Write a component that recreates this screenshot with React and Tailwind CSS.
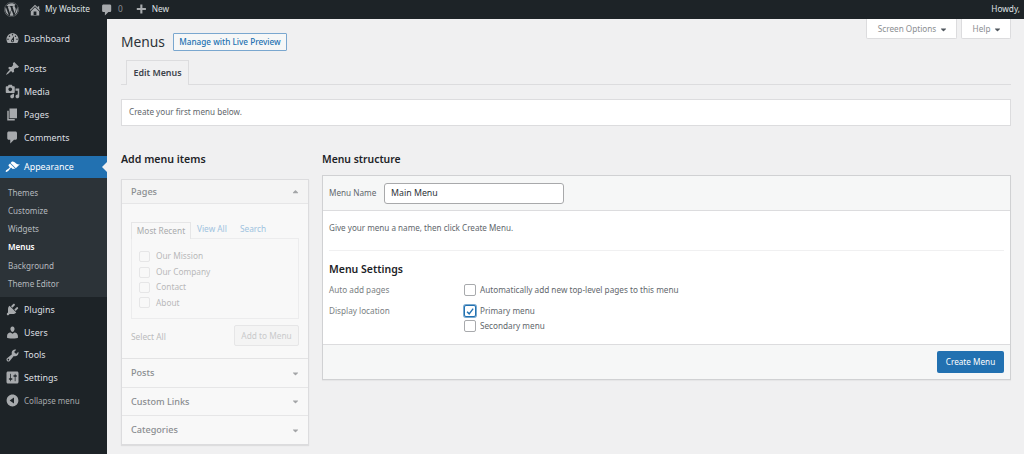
import React from "react";
import { FaWordpress, FaCaretDown, FaCaretUp } from "react-icons/fa";

const D = {
  home: "M16 8.5l1.53 1.53-1.06 1.06L10 4.62l-6.47 6.47-1.06-1.06L10 2.5l4 4v-2h2v4zm-6-2.46l6 5.99V18H4v-5.97zM12 17v-5H8v5h4z",
  comment: "M5 2h9c1.1 0 2 .9 2 2v7c0 1.1-.9 2-2 2h-2l-5 5v-5H5c-1.1 0-2-.9-2-2V4c0-1.1.9-2 2-2z",
  plus: "M17 7v3h-5v5H9v-5H4V7h5V2h3v5h5z",
  dashboard: "M3.76 16h12.48c1.1-1.37 1.76-3.11 1.76-5 0-4.42-3.58-8-8-8s-8 3.58-8 8c0 1.89.66 3.63 1.76 5zM10 4c.55 0 1 .45 1 1s-.45 1-1 1-1-.45-1-1 .45-1 1-1zM6 6c.55 0 1 .45 1 1s-.45 1-1 1-1-.45-1-1 .45-1 1-1zm8 0c.55 0 1 .45 1 1s-.45 1-1 1-1-.45-1-1 .45-1 1-1zm-5.37 5.55L12 7v6c0 1.1-.9 2-2 2s-2-.9-2-2c0-.57.24-1.08.63-1.45zM4 10c.55 0 1 .45 1 1s-.45 1-1 1-1-.45-1-1 .45-1 1-1zm12 0c.55 0 1 .45 1 1s-.45 1-1 1-1-.45-1-1 .45-1 1-1zm-5 3c0-.55-.45-1-1-1s-1 .45-1 1 .45 1 1 1 1-.45 1-1z",
  pin: "M10.44 3.02l1.82-1.82 6.36 6.35-1.83 1.82c-1.05-.68-2.48-.57-3.41.36l-.75.75c-.92.93-1.04 2.35-.35 3.41l-1.83 1.82-2.41-2.41-2.8 2.79c-.42.42-3.38 2.71-3.8 2.29s1.86-3.39 2.28-3.81l2.79-2.79L4.1 9.36l1.83-1.82c1.05.69 2.48.57 3.4-.36l.75-.75c.93-.92 1.05-2.35.36-3.41z",
  media: "M13 11V4c0-.55-.45-1-1-1h-1.67L9 1H5L3.67 3H2c-.55 0-1 .45-1 1v7c0 .55.45 1 1 1h10c.55 0 1-.45 1-1zM7 4.5c1.38 0 2.5 1.12 2.5 2.5S8.38 9.5 7 9.5 4.5 8.38 4.5 7 5.62 4.5 7 4.5zM14 6h5v10.5c0 1.38-1.12 2.5-2.5 2.5S14 17.88 14 16.5s1.12-2.5 2.5-2.5c.17 0 .34.02.5.05V9h-3V6zm-4 8.05V13h2v3.5c0 1.38-1.12 2.5-2.5 2.5S7 17.88 7 16.5 8.12 14 9.5 14c.17 0 .34.02.5.05z",
  page: "M6 15V2h10v13H6zm-1 1h8v2H3V5h2v11z",
  brush: "M14.48 11.06L7.41 3.99l1.5-1.5c.5-.56 2.3-.47 3.51.32 1.21.8 1.43 1.28 2.91 2.1 1.18.64 2.45 1.26 4.45.85zm-.71.71L6.7 4.7 4.93 6.47c-.39.39-.39 1.02 0 1.41l1.06 1.06c.39.39.39 1.03 0 1.42-.6.6-1.43 1.11-2.21 1.69-.35.26-.7.53-1.01.84C1.43 13.23.4 14.98 1.1 15.67c.7.7 2.45-.33 3.79-1.68.31-.31.58-.66.84-1.01.58-.78 1.09-1.61 1.69-2.21.39-.39 1.03-.39 1.42 0l1.06 1.06c.39.39 1.02.39 1.41 0z",
  plugin: "M13.11 4.36L9.87 7.6 8 5.73l3.24-3.24c.35-.34 1.05-.2 1.56.32.52.51.66 1.21.31 1.55zm-8 1.77l.91-1.12 9.01 9.01-1.19.84c-.71.71-2.63 1.16-3.82 1.16H6.14L4.9 17.26c-.59.59-1.54.59-2.12 0-.59-.58-.59-1.53 0-2.12l1.24-1.24v-3.88c0-1.13.4-3.19 1.09-3.89zm7.26 3.97l3.24-3.24c.34-.35 1.04-.21 1.55.31.52.51.66 1.21.31 1.55l-3.24 3.25z",
  users: "M10 9.25c-2.27 0-2.73-3.44-2.73-3.44C7 4.02 7.82 2 9.97 2c2.16 0 2.98 2.02 2.71 3.81 0 0-.41 3.44-2.68 3.44zm0 2.57L12.72 10c2.39 0 4.52 2.33 4.52 4.53v2.49s-3.65 1.13-7.24 1.13c-3.65 0-7.24-1.13-7.24-1.13v-2.49c0-2.25 1.94-4.48 4.47-4.48z",
  tools: "M16.68 9.77c-1.34 1.34-3.3 1.67-4.95.99l-5.41 6.52c-.99.99-2.59.99-3.58 0s-.99-2.59 0-3.57l6.52-5.42c-.68-1.65-.35-3.61.99-4.95 1.28-1.28 3.12-1.62 4.72-1.06l-2.89 2.89 2.82 2.82 2.86-2.87c.53 1.58.18 3.39-1.08 4.65zM3.81 16.21c.4.39 1.04.39 1.43 0 .4-.4.4-1.04 0-1.43-.39-.4-1.03-.4-1.43 0-.39.39-.39 1.03 0 1.43z",
  settings: "M18 16V4c0-1.1-.9-2-2-2H4c-1.1 0-2 .9-2 2v12c0 1.1.9 2 2 2h12c1.1 0 2-.9 2-2zM8 11h1c.55 0 1 .45 1 1s-.45 1-1 1H8v1.5c0 .28-.22.5-.5.5s-.5-.22-.5-.5V13H6c-.55 0-1-.45-1-1s.45-1 1-1h1V5.5c0-.28.22-.5.5-.5s.5.22.5.5V11zm5-2h-1c-.55 0-1-.45-1-1s.45-1 1-1h1V5.5c0-.28.22-.5.5-.5s.5.22.5.5V7h1c.55 0 1 .45 1 1s-.45 1-1 1h-1v5.5c0 .28-.22.5-.5.5s-.5-.22-.5-.5V9z",
  collapse: "M10 2.16c4.33 0 7.84 3.51 7.84 7.84s-3.51 7.84-7.84 7.84S2.16 14.33 2.16 10 5.71 2.16 10 2.16zm2 11.72V6.12L6.18 9.97z",
};

function Dash({ d, className }) {
  return (
    <svg viewBox="0 0 20 20" className={className} fill="currentColor">
      <path d={d} />
    </svg>
  );
}

function NavItem({ d, label, h = "h-[23px]", active }) {
  return (
    <div className={`relative flex items-center ${h} pl-[5px] ${active ? "bg-[#2271b1] text-white" : "text-[#dcdfe1]"}`}>
      <span className={`w-[19px] flex items-center ${active ? "text-white" : "text-[#a7aaad]"}`}>
        <Dash d={d} className="w-[15px] h-[15px]" />
      </span>
      <span className="text-[8.9px]">{label}</span>
      {active && (
        <span className="absolute right-0 top-[6px] w-0 h-0 border-y-[5px] border-y-transparent border-r-[5px] border-r-[#f0f0f1]" />
      )}
    </div>
  );
}

function SubItem({ label, current }) {
  return (
    <div className={`h-[18.3px] pl-[8px] flex items-center text-[8.1px] ${current ? "font-semibold text-white" : "text-[#b4b9be]"}`}>
      {label}
    </div>
  );
}

function Check({ checked }) {
  return (
    <span className={`w-[12px] h-[12px] rounded-[2px] bg-white border flex items-center justify-center shrink-0 ${checked ? "border-[#2271b1] ring-1 ring-[#2271b1]/60" : "border-[#a8aaad]"}`}>
      {checked && (
        <svg viewBox="0 0 12 12" className="w-[11px] h-[11px] text-[#2271b1]" fill="none" stroke="currentColor" strokeWidth="1.7">
          <path d="M2.5 6.2 5 8.8 9.8 2.6" />
        </svg>
      )}
    </span>
  );
}

function PageRow({ label }) {
  return (
    <div className="h-[15.4px] flex items-center gap-[6px] text-[8.3px] text-[#b9b9ba]">
      <span className="w-[11px] h-[11px] rounded-[2px] border border-[#e6e6e7] bg-[#f8f8f8]" />
      {label}
    </div>
  );
}

function Accordion({ label, h, last }) {
  return (
    <div className={`${h} flex items-center justify-between pl-[9px] pr-[8px] text-[9.1px] font-medium text-[#8a8d90] ${last ? "" : "border-b border-[#e6e6e7]"}`}>
      {label}
      <FaCaretDown className="w-[9px] h-[9px] text-[#a3a5a7]" />
    </div>
  );
}

export default function App() {
  return (
    <div className="w-[1024px] h-[454px] overflow-hidden flex flex-col bg-[#f0f0f1] text-[#3c434a] font-['Noto_Sans','Open_Sans',sans-serif]">
      {/* Admin bar */}
      <header className="h-[19px] shrink-0 bg-[#1d2327] flex items-center text-[8.3px] text-[#dfe1e3]">
        <FaWordpress className="w-[15px] h-[15px] ml-[4px] text-[#a7aaad]" />
        <Dash d={D.home} className="w-[14px] h-[14px] ml-[9px] text-[#a7aaad]" />
        <span className="ml-[3px]">My Website</span>
        <Dash d={D.comment} className="w-[14px] h-[14px] ml-[10px] text-[#a7aaad]" />
        <span className="ml-[4px] text-[#8c8f94]">0</span>
        <Dash d={D.plus} className="w-[14px] h-[14px] ml-[11px] text-[#a7aaad]" />
        <span className="ml-[4px]">New</span>
        <span className="ml-auto mr-[4px]">Howdy,</span>
      </header>

      <div className="flex flex-1 min-h-0">
        {/* Sidebar */}
        <aside className="w-[107px] shrink-0 bg-[#1d2327] pt-[8px] flex flex-col">
          <NavItem d={D.dashboard} label="Dashboard" />
          <div className="h-[7px]" />
          <NavItem d={D.pin} label="Posts" />
          <NavItem d={D.media} label="Media" />
          <NavItem d={D.page} label="Pages" />
          <NavItem d={D.comment} label="Comments" />
          <div className="h-[7px]" />
          <NavItem d={D.brush} label="Appearance" h="h-[22px]" active />
          <div className="bg-[#2c3338] pt-[5.5px] pb-[4px]">
            <SubItem label="Themes" />
            <SubItem label="Customize" />
            <SubItem label="Widgets" />
            <SubItem label="Menus" current />
            <SubItem label="Background" />
            <SubItem label="Theme Editor" />
          </div>
          <div className="h-[1px]" />
          <NavItem d={D.plugin} label="Plugins" h="h-[22.7px]" />
          <NavItem d={D.users} label="Users" h="h-[22.7px]" />
          <NavItem d={D.tools} label="Tools" h="h-[22.7px]" />
          <NavItem d={D.settings} label="Settings" h="h-[22.7px]" />
          <div className="flex items-center h-[23px] pl-[5px] text-[8px] text-[#a7aaad]">
            <span className="w-[19px] flex items-center">
              <Dash d={D.collapse} className="w-[15px] h-[15px]" />
            </span>
            Collapse menu
          </div>
        </aside>

        {/* Main */}
        <main className="flex-1 min-w-0 pl-[14px] pr-[13px]">
          <div className="flex justify-between items-start h-[41px]">
            <div className="flex items-center gap-[8px] pt-[14px]">
              <h1 className="text-[13.8px] leading-[18px] text-[#2c3338]">Menus</h1>
              <span className="h-[18px] w-[114px] flex items-center justify-center border border-[#7aa7cf] bg-[#f6f7f7] rounded-[1px] text-[8.2px] font-medium text-[#2271b1]">
                Manage with Live Preview
              </span>
            </div>
            <div className="flex gap-[4px] text-[8.2px] text-[#8b8e91]">
              <span className="w-[91px] h-[20px] pl-[3px] pt-[1px] bg-white rounded-b-[2px] border border-t-0 border-[#dcdcde] flex items-center justify-center gap-[3px]">
                Screen Options <FaCaretDown className="w-[9px] h-[9px] text-[#50575e]" />
              </span>
              <span className="w-[50px] h-[20px] pl-[3px] pt-[1px] bg-white rounded-b-[2px] border border-t-0 border-[#dcdcde] flex items-center justify-center gap-[3px]">
                Help <FaCaretDown className="w-[9px] h-[9px] text-[#50575e]" />
              </span>
            </div>
          </div>

          <div className="h-[25px] border-b border-[#dcdcde] pl-[5px]">
            <span className="h-[25px] w-[63px] flex items-center justify-center border border-b-0 border-[#dcdcde] bg-[#f0f0f1] text-[8.9px] font-semibold text-[#3c434a]">
              Edit Menus
            </span>
          </div>

          <div className="mt-[14px] h-[27px] pl-[7px] flex items-center bg-white border border-[#dcdcde] text-[8.15px] text-[#62676c]">
            Create your first menu below.
          </div>

          <div className="flex mt-[24px] gap-[13px]">
            {/* Left column */}
            <section className="w-[188px] shrink-0">
              <h2 className="text-[10.6px] font-semibold leading-[18px] text-[#1d2327]">Add menu items</h2>
              <div className="mt-[11px] border border-[#dcdcde] shadow-[0_1px_1px_rgba(0,0,0,0.08)] bg-[#f8f8f8]">
                <div className="h-[24px] flex items-center justify-between pl-[9px] pr-[8px] text-[9.1px] font-medium text-[#8a8d90] bg-[#f4f4f4] border-b border-[#e6e6e7]">
                  Pages
                  <FaCaretUp className="w-[9px] h-[9px] text-[#a3a5a7]" />
                </div>
                <div className="h-[155px] px-[9px] pt-[17px] border-b border-[#e3e3e4]">
                  <div className="flex items-end h-[17px] text-[8.3px]">
                    <span className="w-[60px] h-[17px] flex items-center justify-center border border-b-0 border-[#e6e6e7] text-[#a9abad] bg-[#f8f8f8] relative top-[1px]">Most Recent</span>
                    <span className="ml-[6px] text-[#a0c3df] self-center">View All</span>
                    <span className="ml-[13px] text-[#a0c3df] self-center">Search</span>
                  </div>
                  <div className="h-[81px] border border-[#ececed] pl-[7px] pt-[10px]">
                    <PageRow label="Our Mission" />
                    <PageRow label="Our Company" />
                    <PageRow label="Contact" />
                    <PageRow label="About" />
                  </div>
                  <div className="flex items-center justify-between mt-[6px] text-[8.3px]">
                    <span className="text-[#bbbcbd] mt-[4px]">Select All</span>
                    <span className="w-[65px] h-[21px] pt-[1px] flex items-center justify-center border border-[#e6e6e7] rounded-[2px] bg-[#f4f4f4] text-[#c9cacb]">Add to Menu</span>
                  </div>
                </div>
                <Accordion label="Posts" h="h-[29px]" />
                <Accordion label="Custom Links" h="h-[28px]" />
                <Accordion label="Categories" h="h-[28px]" last />
              </div>
            </section>

            {/* Right column */}
            <section className="flex-1 min-w-0">
              <h2 className="text-[10.4px] font-semibold leading-[18px] text-[#1d2327]">Menu structure</h2>
              <div className="mt-[7px] border border-[#d0d1d3] shadow-[0_1px_1px_rgba(0,0,0,0.04)]">
                <div className="h-[35px] bg-[#f6f7f7] border-b border-[#dcdcde] flex items-center pl-[6px] text-[8.2px] text-[#62676c]">
                  <span className="w-[55px] pt-[1px]">Menu Name</span>
                  <span className="w-[180px] h-[21px] pl-[6px] pt-[2px] flex items-center bg-white border border-[#a8a9ab] rounded-[3px] text-[8.8px] text-[#2c3338]">Main Menu</span>
                </div>
                <div className="h-[133px] bg-white px-[6px] pt-[11px]">
                  <p className="text-[8.1px] leading-[12px] text-[#62676c]">Give your menu a name, then click Create Menu.</p>
                  <div className="mt-[16px] border-t border-[#f0f0f1]" />
                  <h3 className="mt-[10px] text-[10.5px] font-semibold leading-[16px] text-[#1d2327]">Menu Settings</h3>
                  <div className="flex mt-[7px] text-[8.2px] text-[#62676c]">
                    <span className="w-[135px] text-[#7b7f83]">Auto add pages</span>
                    <span className="flex items-center gap-[4px]"><Check />Automatically add new top-level pages to this menu</span>
                  </div>
                  <div className="flex mt-[9px] text-[8.2px] text-[#62676c]">
                    <span className="w-[135px] text-[#7b7f83]">Display location</span>
                    <div className="flex flex-col gap-[2.5px]">
                      <span className="flex items-center gap-[4px]"><Check checked />Primary menu</span>
                      <span className="flex items-center gap-[4px]"><Check />Secondary menu</span>
                    </div>
                  </div>
                </div>
                <div className="h-[35px] bg-[#f6f7f7] border-t border-[#dcdcde] flex items-center justify-end pr-[6px]">
                  <span className="w-[67px] h-[22px] flex items-center justify-center bg-[#2271b1] rounded-[2px] text-[8.2px] text-white">Create Menu</span>
                </div>
              </div>
            </section>
          </div>
        </main>
      </div>
    </div>
  );
}
